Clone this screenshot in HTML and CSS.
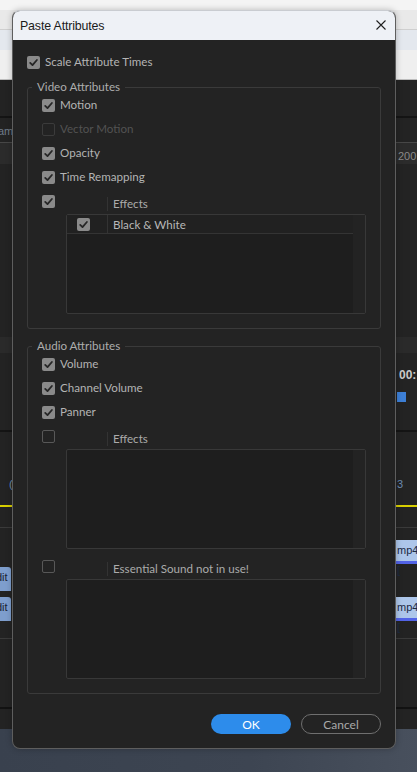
FILE: index.html
```html
<!DOCTYPE html>
<html>
<head>
<meta charset="utf-8">
<link rel="stylesheet" href="styles.css">
</head>
<body>
<div class="desktop">
  <div class="bg-top"></div>
  <div class="bg-menu"></div>
  <div class="bg-tabs"></div>
  <div class="bg-tabs2"></div>
  <div class="bg-app">
    <div class="deco line-dark" style="top:36px"></div>
    <div class="deco ruler" style="top:62px"></div>
    <div class="deco txt-am">am</div>
    <div class="deco txt-200">200</div>
    <div class="deco band" style="top:257px"></div>
    <div class="deco txt-time">00:</div>
    <div class="deco marker"></div>
    <div class="deco line-dark" style="top:350px"></div>
    <div class="deco txt-l">(</div>
    <div class="deco txt-r">3</div>
    <div class="deco yellow"></div>
    <div class="deco line-grey" style="top:447px"></div>
    <div class="deco clip-r" style="top:460px"><span>mp4 [</span></div>
    <div class="deco clip-r" style="top:517px"><span>mp4 [</span></div>
    <div class="deco clip-l" style="top:487px"><span>dit</span></div>
    <div class="deco clip-l" style="top:517px"><span>dit</span></div>
    <div class="deco line-grey" style="top:558px"></div>
    <div class="deco line-black" style="top:627px"></div>
  </div>
  <div class="bg-bottom"></div>

  <div class="dialog">
    <div class="titlebar">
      <span class="title">Paste Attributes</span>
      <svg class="close" width="10" height="10" viewBox="0 0 10 10"><path d="M0.5 0.5 L9.5 9.5 M9.5 0.5 L0.5 9.5" stroke="#1f1f1f" stroke-width="1.1" fill="none"/></svg>
    </div>
    <div class="body">
      <div class="row">
        <span class="cb on"><svg viewBox="0 0 13 13"><path d="M3.2 6.9 L5.5 9.1 L9.9 4" /></svg></span>
        <span class="lbl">Scale Attribute Times</span>
      </div>

      <div class="group video">
        <span class="legend">Video Attributes</span>
        <div class="row">
          <span class="cb on"><svg viewBox="0 0 13 13"><path d="M3.2 6.9 L5.5 9.1 L9.9 4" /></svg></span>
          <span class="lbl">Motion</span>
        </div>
        <div class="row">
          <span class="cb dis"></span>
          <span class="lbl disabled">Vector Motion</span>
        </div>
        <div class="row">
          <span class="cb on"><svg viewBox="0 0 13 13"><path d="M3.2 6.9 L5.5 9.1 L9.9 4" /></svg></span>
          <span class="lbl">Opacity</span>
        </div>
        <div class="row">
          <span class="cb on"><svg viewBox="0 0 13 13"><path d="M3.2 6.9 L5.5 9.1 L9.9 4" /></svg></span>
          <span class="lbl">Time Remapping</span>
        </div>
        <div class="row head">
          <span class="cb on"><svg viewBox="0 0 13 13"><path d="M3.2 6.9 L5.5 9.1 L9.9 4" /></svg></span>
          <span class="colhead">Effects</span>
        </div>
        <div class="list">
          <div class="list-main">
            <div class="list-row">
              <span class="cell-check"><span class="cb on"><svg viewBox="0 0 13 13"><path d="M3.2 6.9 L5.5 9.1 L9.9 4" /></svg></span></span>
              <span class="cell-name">Black &amp; White</span>
            </div>
          </div>
          <div class="list-scroll"></div>
        </div>
      </div>

      <div class="group audio">
        <span class="legend">Audio Attributes</span>
        <div class="row">
          <span class="cb on"><svg viewBox="0 0 13 13"><path d="M3.2 6.9 L5.5 9.1 L9.9 4" /></svg></span>
          <span class="lbl">Volume</span>
        </div>
        <div class="row">
          <span class="cb on"><svg viewBox="0 0 13 13"><path d="M3.2 6.9 L5.5 9.1 L9.9 4" /></svg></span>
          <span class="lbl">Channel Volume</span>
        </div>
        <div class="row">
          <span class="cb on"><svg viewBox="0 0 13 13"><path d="M3.2 6.9 L5.5 9.1 L9.9 4" /></svg></span>
          <span class="lbl">Panner</span>
        </div>
        <div class="row head">
          <span class="cb off"></span>
          <span class="colhead">Effects</span>
        </div>
        <div class="list">
          <div class="list-main"></div>
          <div class="list-scroll"></div>
        </div>
        <div class="row head essential">
          <span class="cb off"></span>
          <span class="colhead">Essential Sound not in use!</span>
        </div>
        <div class="list">
          <div class="list-main"></div>
          <div class="list-scroll"></div>
        </div>
      </div>

      <div class="actions">
        <button class="btn ok">OK</button>
        <button class="btn cancel">Cancel</button>
      </div>
    </div>
  </div>
</div>
</body>
</html>
```
FILE: styles.css
```css
html, body {
  margin: 0;
  padding: 0;
}
body {
  width: 417px;
  height: 772px;
  overflow: hidden;
  background: #222222;
}
.desktop {
  position: relative;
  width: 417px;
  height: 772px;
  display: flex;
  flex-direction: column;
}
.bg-top {
  height: 10px;
  background: #f4f4f4;
}
.bg-menu {
  height: 19px;
  background: #e9e9e9;
  border-bottom: 1px solid #cfcfcf;
}
.bg-tabs {
  height: 20px;
  background: #e4e8ee;
}
.bg-tabs2 {
  height: 29px;
  background: #efefef;
  border-bottom: 1px solid #bdbdbd;
}
.bg-app {
  position: relative;
  flex: 1;
  background: #232323;
}
.bg-bottom {
  height: 43px;
  background: linear-gradient(90deg, #39414e 0%, #3d4552 60%, #48505d 100%);
}
.deco {
  position: absolute;
  left: 0;
  right: 0;
}
.line-dark {
  height: 2px;
  background: #141414;
}
.line-grey {
  height: 1px;
  background: #3a3a3a;
}
.line-black {
  height: 2px;
  background: #121212;
}
.ruler {
  height: 21px;
  background: #2b2b2b;
  border-top: 1px solid #474747;
}
.band {
  height: 16px;
  background: #2a2a2a;
}
.txt-am, .txt-200, .txt-time, .txt-l, .txt-r {
  font: 11px "Liberation Sans", sans-serif;
  color: #6f7b88;
  right: auto;
}
.txt-am { top: 45px; left: -2px; }
.txt-200 { top: 70px; left: 398px; color: #8a8a8a; }
.txt-time { top: 288px; left: 399px; color: #c9c9c9; font-weight: bold; font-size: 12px; }
.marker { top: 312px; left: 397px; right: auto; width: 9px; height: 10px; background: #3d7fd6; }
.txt-l { top: 398px; left: 9px; color: #6c8bb4; }
.txt-r { top: 398px; left: 397px; color: #6c8bb4; }
.yellow {
  top: 425px;
  height: 2px;
  background: #d8cf00;
}
.clip-r {
  left: 396px;
  height: 24px;
  background: #adc6ea;
  border-bottom: 3px solid #5263e6;
  box-sizing: border-box;
  font: 11px "Liberation Sans", sans-serif;
  color: #1c2a44;
  padding-left: 1px;
  line-height: 20px;
}
.clip-l {
  right: auto;
  left: 0;
  width: 11px;
  height: 24px;
  background: #7e9ecd;
  border-radius: 0 3px 0 0;
  font: 11px "Liberation Sans", sans-serif;
  color: #1b2233;
  line-height: 20px;
  overflow: hidden;
  text-indent: -4px;
}

/* dialog */
.dialog {
  position: absolute;
  left: 12px;
  top: 10px;
  width: 384px;
  box-sizing: border-box;
  border: 1px solid #5e5e5e;
  border-top-color: #c9ccd1;
  border-radius: 8px;
  overflow: hidden;
  background: #232323;
  box-shadow: 0 0 6px rgba(0,0,0,0.25);
}
.titlebar {
  height: 29px;
  background: #eef1f6;
  display: flex;
  align-items: center;
  justify-content: space-between;
  padding: 0 9px 0 7px;
}
.title {
  font: 12.4px "Liberation Sans", Arial, sans-serif;
  color: #1b1b1b;
  letter-spacing: -0.15px;
}
.close {
  display: block;
  margin-top: -2px;
}
.body {
  padding: 10px 14px 14px 14px;
  font-family: Lato, "Liberation Sans", sans-serif;
  font-size: 11.6px;
  color: #b4b4b4;
}
.row {
  display: flex;
  align-items: center;
  height: 24px;
}
.lbl {
  margin-left: 5px;
  line-height: 14px;
}
.lbl.disabled {
  color: #525252;
}
.cb {
  width: 13px;
  height: 13px;
  flex: none;
  box-sizing: border-box;
  border-radius: 2px;
  display: block;
}
.cb svg {
  display: block;
  width: 13px;
  height: 13px;
}
.cb svg path {
  fill: none;
  stroke: #262626;
  stroke-width: 1.8;
  stroke-linecap: round;
  stroke-linejoin: round;
}
.cb.on {
  background: #8a8a8a;
}
.cb.off {
  border: 1.5px solid #585858;
}
.cb.dis {
  border: 1.5px solid #3b3b3b;
}
.group {
  display: flex;
  flex-direction: column;
  border: 1px solid #3a3a3a;
  border-radius: 3px;
  padding: 0 14px 14px 14px;
}
.group.video { margin-top: 13px; }
.group.audio { margin-top: 17px; }
.legend {
  align-self: flex-start;
  margin: -7px 0 0 -10px;
  padding: 0 5px;
  line-height: 12px;
  background: #232323;
  color: #adadad;
}
.colhead {
  margin-left: 52px;
  margin-top: 5px;
  border-left: 1px solid #333333;
  height: 14px;
  line-height: 14px;
  padding-left: 5px;
  color: #ababab;
}
.row.essential {
  margin-top: 5px;
}
.list {
  margin: 1px 0 0 24px;
  height: 100px;
  box-sizing: border-box;
  border: 1px solid #383838;
  border-radius: 2px;
  background: #1e1e1e;
  display: flex;
}
.list-main {
  flex: 1;
}
.list-scroll {
  width: 12px;
  background: #232323;
}
.list-row {
  height: 18px;
  border-bottom: 1px solid #343434;
  background: #212121;
  display: flex;
  align-items: stretch;
}
.cell-check {
  width: 40px;
  box-sizing: border-box;
  padding-left: 10px;
  display: flex;
  align-items: center;
}
.cell-name {
  border-left: 1px solid #333333;
  padding-left: 5px;
  display: flex;
  align-items: center;
  color: #b8b8b8;
}
.actions {
  display: flex;
  justify-content: flex-end;
  gap: 10px;
  margin-top: 20px;
}
.btn {
  width: 80px;
  height: 20px;
  border-radius: 10px;
  box-sizing: border-box;
  font-family: Lato, "Liberation Sans", sans-serif;
  font-size: 12px;
  padding: 0;
  margin: 0;
}
.btn.ok {
  background: #2d8ceb;
  border: none;
  color: #ffffff;
}
.btn.cancel {
  background: transparent;
  border: 1.5px solid #6f6f6f;
  color: #a9a9a9;
}
```
